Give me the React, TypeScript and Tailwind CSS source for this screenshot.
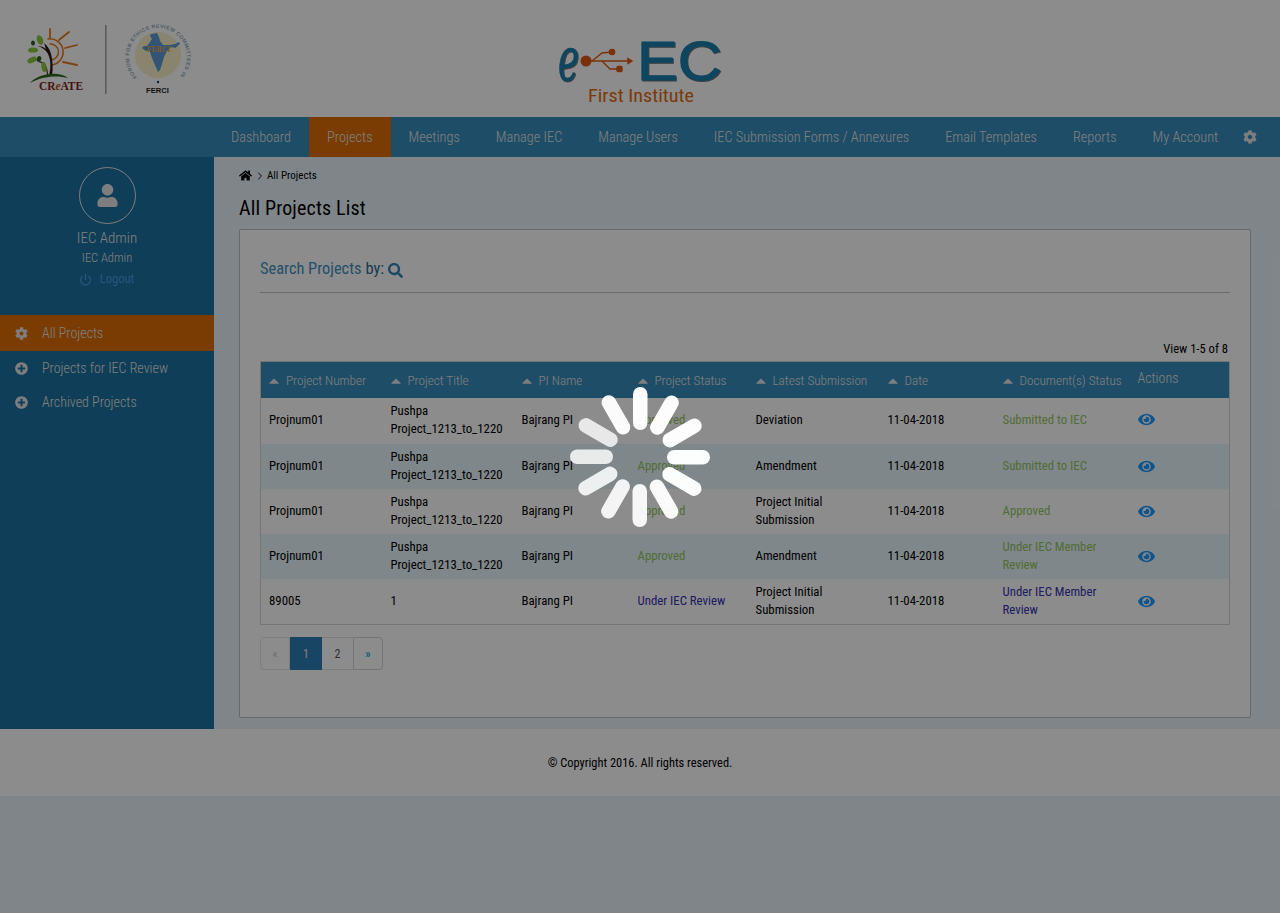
import React from 'react';
import { FaHome, FaUser, FaCog, FaPlusCircle, FaSearch, FaEye } from 'react-icons/fa';
import { Power, ChevronRight } from 'lucide-react';

const navItems = ['Dashboard', 'Projects', 'Meetings', 'Manage IEC', 'Manage Users', 'IEC Submission Forms / Annexures', 'Email Templates', 'Reports', 'My Account'];

const columns = ['Project Number', 'Project Title', 'PI Name', 'Project Status', 'Latest Submission', 'Date', 'Document(s) Status'];

const green = 'text-[#93c763]';
const navy = 'text-[#3b30b0]';

const rows = [
  { num: 'Projnum01', title: ['Pushpa', 'Project_1213_to_1220'], status: 'Approved', statusCls: green, sub: 'Deviation', doc: 'Submitted to IEC', docCls: green },
  { num: 'Projnum01', title: ['Pushpa', 'Project_1213_to_1220'], status: 'Approved', statusCls: green, sub: 'Amendment', doc: 'Submitted to IEC', docCls: green },
  { num: 'Projnum01', title: ['Pushpa', 'Project_1213_to_1220'], status: 'Approved', statusCls: green, sub: 'Project Initial Submission', doc: 'Approved', docCls: green },
  { num: 'Projnum01', title: ['Pushpa', 'Project_1213_to_1220'], status: 'Approved', statusCls: green, sub: 'Amendment', doc: 'Under IEC Member Review', docCls: green },
  { num: '89005', title: ['1'], status: 'Under IEC Review', statusCls: navy, sub: 'Project Initial Submission', doc: 'Under IEC Member Review', docCls: navy },
];

function LeftLogos() {
  return (
    <svg width="180" height="80" viewBox="0 0 180 80" className="ml-[20px] overflow-visible">
      {/* sun */}
      <g fill="none" stroke="#e8791a" strokeLinecap="round">
        <path d="M28 14a13 13 0 0 1 4 26" strokeWidth="1.5" />
        <path d="M30 19a8 8 0 0 1 1 16" strokeWidth="1.5" />
        <path d="M30 4v9M39 15l10-8M45 23l12-3M43 37l14 3" strokeWidth="1.8" />
      </g>
      {/* tree */}
      <path d="M29 51c2-9 2-16-1-22-2-4-6-7-11-8 4 0 7 1 9 3-1-2-1-4-2-6 4 3 6 7 7 11 2 7 2 15 1 22z" fill="#2a1a12" />
      <path d="M27 51c0-5-1-9-4-12-1-1-3-2-5-2 3-1 5 0 7 2 2 3 3 7 3 12z" fill="#2a1a12" />
      <path d="M10 58c7-9 28-13 38-5-11-3-26-2-38 5z" fill="#2f6b1a" />
      <g fill="#8cc63f">
        <ellipse cx="20" cy="15" rx="3" ry="5" transform="rotate(-20 20 15)" />
        <ellipse cx="13" cy="25" rx="5" ry="2.6" />
        <ellipse cx="12" cy="35" rx="5" ry="2.8" transform="rotate(-25 12 35)" />
        <ellipse cx="24" cy="42" rx="2.5" ry="5" transform="rotate(-10 24 42)" />
      </g>
      <g fill="#2f5d2a">
        <ellipse cx="13" cy="18" rx="2" ry="2.5" />
        <ellipse cx="19" cy="34" rx="2.2" ry="3" transform="rotate(20 19 34)" />
      </g>
      <text x="19" y="65" fontFamily="'Liberation Serif', serif" fontSize="12" fontWeight="700" fill="#7a1f1f" textLength="44" lengthAdjust="spacingAndGlyphs">
        CR<tspan fontStyle="italic" fill="#c8541a">e</tspan>ATE
      </text>
      {/* divider */}
      <rect x="85" y="0" width="1.6" height="69" fill="#a8a8a8" />
      {/* ferci seal */}
      <circle cx="138" cy="30" r="23" fill="#f7f0c8" />
      <defs>
        <path id="seal" d="M117 52a29 29 0 1 1 42 0" />
      </defs>
      <text fontFamily="'Liberation Sans', sans-serif" fontSize="5.2" fontWeight="700" fill="#8fa9b8" letterSpacing="0.45">
        <textPath href="#seal">FORUM FOR ETHICS REVIEW COMMITTEES IN INDIA</textPath>
      </text>
      <path d="M132 9l5-1 2 4 1 4 3 4 7 0 5-1 4-2 1 2-5 4-3-1-2 1-3 3-3 6-2 7-2 6-2 2-3-7-3-7-2-6-1-2-3 1-4-3 2-2 3 0 3-4 2-3-2-3 1-2z" fill="#5b9bd5" />
      <text x="127" y="27" fontFamily="'Liberation Serif', serif" fontSize="7.5" fontWeight="700" fill="#e8a53a">FERCI</text>
      <circle cx="138" cy="57" r="1.2" fill="#1c3d5a" />
      <text x="126" y="68" fontFamily="'Liberation Sans', sans-serif" fontSize="7.6" fontWeight="700" fill="#222222">FERCI</text>
    </svg>
  );
}

function CenterLogo() {
  return (
    <svg width="176" height="74" viewBox="0 0 176 74" className="overflow-visible">
      <g fill="#1a80ad" stroke="#1a80ad" strokeLinejoin="round" style={{ filter: 'drop-shadow(1.5px 1.5px 0.6px rgba(0,0,0,0.55))' }}>
        <text x="3" y="45" strokeWidth="0.8" fontFamily="'DejaVu Serif', serif" fontStyle="italic" fontSize="60" textLength="21" lengthAdjust="spacingAndGlyphs">e</text>
        <text x="82" y="45" strokeWidth="1.2" fontFamily="'Liberation Sans', sans-serif" fontSize="56" textLength="85" lengthAdjust="spacingAndGlyphs">EC</text>
      </g>
      <g stroke="#de5a14" strokeWidth="1.4" fill="#de5a14">
        <circle cx="31" cy="26" r="4.8" />
        <path d="M35 26h38" fill="none" />
        <path d="M73 23.5l4 2.5-4 2.5z" />
        <path d="M37 26l10-8 10-1M47 26l8 8h9" fill="none" />
        <circle cx="57" cy="17" r="2.6" />
        <rect x="62" y="31.5" width="5" height="5" rx="1" />
      </g>
      <text x="33" y="67" fontFamily="'Roboto Condensed', 'Liberation Sans Narrow', Roboto, sans-serif" fontSize="19" fill="#e06a10" textLength="106" lengthAdjust="spacingAndGlyphs">First Institute</text>
    </svg>
  );
}

function SortCaret() {
  return (
    <svg width="10" height="6" viewBox="0 0 10 6" className="shrink-0">
      <path d="M5 0.5 9.6 5a.5.5 0 0 1-.4.8H.8A.5.5 0 0 1 .4 5z" fill="currentColor" />
    </svg>
  );
}

const spinnerOpacity = [0.98, 0.98, 0.98, 0.98, 0.98, 0.96, 0.93, 0.9, 0.87, 0.83, 0.8, 0.97];

function Spinner() {
  return (
    <svg width="142" height="142" viewBox="-71 -71 142 142">
      {spinnerOpacity.map((o, i) => (
        <rect key={i} x="-7" y="-70" width="14.5" height="43" rx="7.2" fill="#ffffff" opacity={o} transform={`rotate(${i * 30})`} />
      ))}
    </svg>
  );
}

export default function App() {
  return (
    <div className="relative min-h-[913px] bg-[#e8f3f9] font-['Roboto_Condensed','Liberation_Sans_Narrow',Roboto,sans-serif] text-[13px] text-black">
      {/* header */}
      <header className="relative flex h-[117px] items-start justify-between bg-white pt-[25px]">
        <LeftLogos />
        <div className="absolute left-[555px] top-[35px]">
          <CenterLogo />
        </div>
      </header>

      {/* nav */}
      <nav className="flex h-[40px] items-stretch bg-[#388dbd] pl-[213px] text-[14.3px] font-light text-[#e6e6e6]">
        {navItems.map((item) => (
          <a key={item} className={`flex items-center px-[18px] pt-[1px] ${item === 'Projects' ? 'bg-[#de6d07]' : ''}`}>
            {item}
          </a>
        ))}
        <span className="ml-[7px] flex items-center">
          <FaCog size={14} />
        </span>
      </nav>

      <div className="flex">
        {/* sidebar */}
        <aside className="flex w-[214px] shrink-0 flex-col bg-[#1b71a0] pt-[10px] font-light text-[#e6e6e6]">
          <div className="flex flex-col items-center">
            <div className="flex h-[57px] w-[57px] items-center justify-center rounded-full border border-[#e6e6e6]">
              <FaUser size={23} />
            </div>
            <div className="mt-[4px] text-[15px] leading-[20px]">IEC Admin</div>
            <div className="mt-[1px] text-[12.5px] leading-[18px]">IEC Admin</div>
            <div className="mt-[2px] flex items-center gap-[8px] pr-[1px] text-[12.6px] font-normal leading-[20px] text-[#4a9ce0]">
              <Power size={13} strokeWidth={2.4} />
              Logout
            </div>
          </div>
          <ul className="mt-[26px] text-[14px]">
            <li className="flex h-[36px] items-center gap-[14px] bg-[#de6d07] pl-[15px]">
              <FaCog size={13} />
              All Projects
            </li>
            <li className="flex h-[35px] items-center gap-[14px] pl-[15px]">
              <FaPlusCircle size={13} />
              Projects for IEC Review
            </li>
            <li className="flex h-[33px] items-center gap-[14px] pl-[15px]">
              <FaPlusCircle size={13} />
              Archived Projects
            </li>
          </ul>
        </aside>

        {/* main */}
        <main className="flex h-[572px] min-w-0 flex-1 flex-col pl-[25px] pr-[29px] pb-[11px]">
          <div className="flex h-[36px] items-center pt-[2px] text-[11px]">
            <FaHome size={13} className="mb-[2px]" />
            <ChevronRight size={12} strokeWidth={1.8} className="ml-[2px]" />
            <span className="ml-[1px]">All Projects</span>
          </div>
          <h1 className="text-[20px] leading-[30px] tracking-[0.15px] text-black">All Projects List</h1>
          <section className="mt-[6px] flex-1 rounded-[2px] border border-[#bdbdbd] bg-white px-[20px]">
            <div className="flex h-[63px] items-end gap-[4px] border-b border-[#c4c4c4] pb-[10px] text-[16.4px] text-[#3f92c2]">
              <span>Search Projects</span>
              <span className="text-[#2a6f96]">by:</span>
              <FaSearch size={15} className="mb-[4px] text-[#2f86b8]" />
            </div>
            <div className="mt-[47px] pr-[2px] text-right text-[12.6px] leading-[18px]">View 1-5 of 8</div>
            <table className="mt-[3px] w-[969px] table-fixed border-collapse border border-[#d5d5d5] text-[12.8px] leading-[18px]">
              <colgroup>
                <col className="w-[122px]" />
                <col className="w-[131px]" />
                <col className="w-[116px]" />
                <col className="w-[118px]" />
                <col className="w-[132px]" />
                <col className="w-[115px]" />
                <col className="w-[135px]" />
                <col className="w-[100px]" />
              </colgroup>
              <thead>
                <tr className="h-[36px] bg-[#388dbd] text-[#e6e6e6]">
                  {columns.map((col) => (
                    <th key={col} className="px-[8px] pt-[2px] text-left text-[13.2px] font-light">
                      <span className="flex items-center gap-[7px] whitespace-nowrap">
                        <SortCaret />
                        {col}
                      </span>
                    </th>
                  ))}
                  <th className="px-[8px] pb-[4px] text-left text-[14px] font-light">Actions</th>
                </tr>
              </thead>
              <tbody>
                {rows.map((row, i) => (
                  <tr key={i} className={`${i === 0 || i === 4 ? 'h-[46px]' : 'h-[45px]'} ${i % 2 === 1 ? 'bg-[#e8f6fb]' : 'bg-white'} ${i === 0 ? '[&>td]:pb-[2px]' : ''}`}>
                    <td className="px-[8px]">{row.num}</td>
                    <td className="px-[8px]">
                      {row.title.map((t) => (
                        <div key={t}>{t}</div>
                      ))}
                    </td>
                    <td className="px-[8px]">Bajrang PI</td>
                    <td className={`px-[8px] ${row.statusCls}`}>{row.status}</td>
                    <td className="px-[8px]">{row.sub}</td>
                    <td className="px-[8px]">11-04-2018</td>
                    <td className={`px-[8px] ${row.docCls}`}>{row.doc}</td>
                    <td className="px-[8px] text-[#1c9cff]">
                      <FaEye size={17} />
                    </td>
                  </tr>
                ))}
              </tbody>
            </table>
            <div className="mt-[12px] flex h-[33px] w-[123px] items-stretch text-[12px]">
              <span className="flex w-[30px] items-center justify-center rounded-l-[4px] border border-[#e5e5e5] text-[#c8c8c8]">«</span>
              <span className="flex w-[32px] items-center justify-center bg-[#2f7fb8] text-[#e6e6e6]">1</span>
              <span className="flex w-[31px] items-center justify-center border-y border-[#e0e0e0] text-[#555555]">2</span>
              <span className="flex w-[30px] items-center justify-center rounded-r-[4px] border border-[#d5d5d5] font-bold text-[#2fa8dc]">»</span>
            </div>
          </section>
        </main>
      </div>

      {/* footer */}
      <footer className="flex h-[67px] items-center justify-center bg-white pt-[1px] text-[12.4px]">© Copyright 2016. All rights reserved.</footer>

      {/* loading overlay */}
      <div className="absolute inset-0 flex items-center justify-center bg-black/45">
        <Spinner />
      </div>
    </div>
  );
}
